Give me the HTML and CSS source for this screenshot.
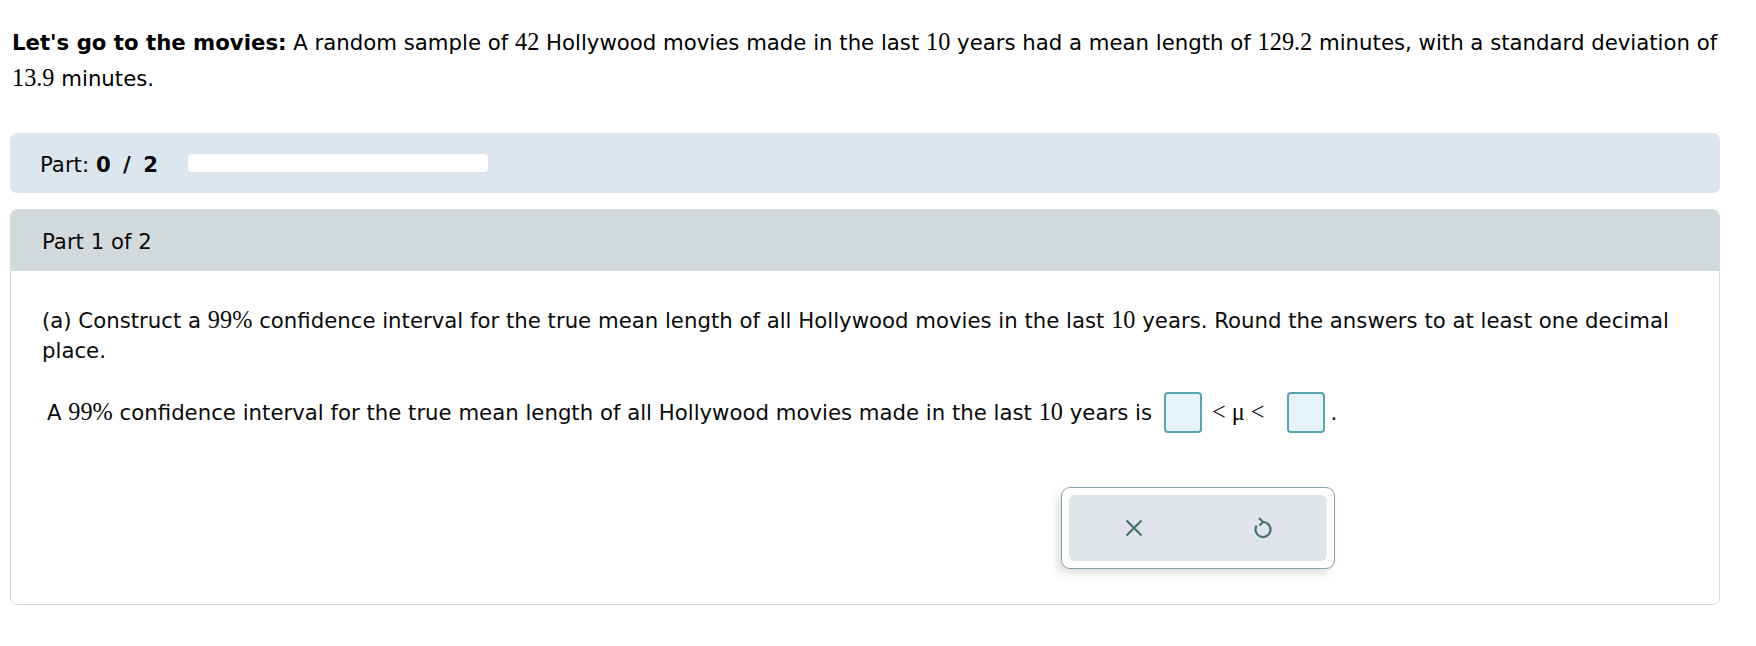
FILE: index.html
```html
<!DOCTYPE html>
<html>
<head>
<meta charset="utf-8">
<link rel="stylesheet" href="styles.css">
</head>
<body>
<div class="page">
  <p class="intro"><b>Let's go to the movies:</b> A random sample of <span class="m">42</span> Hollywood movies made in the last <span class="m">10</span> years had a mean length of <span class="m">129.2</span> minutes, with a standard deviation of <span class="m">13.9</span> <span>minutes.</span></p>

  <div class="partbar">
    <span class="partlabel">Part: <b>0 / 2</b></span>
    <div class="progress"></div>
  </div>

  <div class="card">
    <div class="card-head">Part 1 of 2</div>
    <div class="card-body">
      <p class="question">(a) Construct a <span class="m">99%</span> confidence interval for the true mean length of all Hollywood movies in the last <span class="m">10</span> years. Round the answers to at least one decimal <span>place.</span></p>
      <div class="answer">
        <span>A <span class="m">99%</span> confidence interval for the true mean length of all Hollywood movies made in the last <span class="m">10</span> years is</span>
        <span class="box"></span>
        <span class="m rel">&lt; μ &lt;</span>
        <span class="box"></span>
        <span class="dot">.</span>
      </div>
      <div class="tools">
        <div class="tools-inner">
          <button class="tool" aria-label="clear">
            <svg width="20" height="20" viewBox="0 0 20 20"><path d="M2.5 2.5 L17.5 17.5 M17.5 2.5 L2.5 17.5" stroke="#4a6e78" stroke-width="2.2" fill="none" stroke-linecap="butt"/></svg>
          </button>
          <button class="tool" aria-label="undo">
            <svg width="24" height="26" viewBox="0 0 24 26"><path d="M12 7 A7.5 7.5 0 1 1 5.6 10.6" stroke="#4a6e78" stroke-width="2.2" fill="none"/><path d="M8 3 L12 7 L8.5 10.5" stroke="#4a6e78" stroke-width="2.2" fill="none" stroke-linejoin="miter"/></svg>
          </button>
        </div>
      </div>
    </div>
  </div>
</div>
</body>
</html>
```

FILE: styles.css
```css
html, body {
  margin: 0;
  padding: 0;
  background: #fff;
}
body {
  font-family: "DejaVu Sans", Verdana, sans-serif;
  font-size: 21.25px;
  color: #0a0a0a;
}
.page {
  width: 1710px;
  padding-left: 10px;
}
.m {
  font-family: "Liberation Serif", "Times New Roman", serif;
  font-size: 24.3px;
  line-height: 1;
}
.intro {
  margin: 25px 0 0 2px;
  line-height: 36px;
  color: #000;
}
.intro b {
  font-weight: bold;
}
.partbar {
  margin-top: 36px;
  height: 60px;
  background: #dce6ef;
  border-radius: 7px;
  display: flex;
  align-items: center;
  padding-left: 30px;
  box-sizing: border-box;
}
.partlabel {
  padding-top: 3px;
  width: 148px;
}
.partlabel b {
  word-spacing: 5px;
}
.progress {
  width: 300px;
  height: 18px;
  background: #fff;
  border-radius: 4px;
}
.card {
  margin-top: 16px;
  border: 1px solid #d3dcdf;
  border-radius: 7px;
  overflow: hidden;
}
.card-head {
  height: 61px;
  background: #d2dadd;
  display: flex;
  align-items: center;
  padding-left: 31px;
  padding-top: 2px;
  box-sizing: border-box;
}
.card-body {
  padding: 35px 20px 35px 31px;
}
.question {
  margin: 0;
  line-height: 30px;
}
.answer {
  margin-top: 26px;
  margin-left: 5px;
  height: 41px;
  display: flex;
  align-items: center;
  white-space: nowrap;
}
.box {
  display: inline-block;
  width: 34px;
  height: 37px;
  border: 2px solid #5aa3b0;
  border-radius: 4px;
  background: #e6f4f8;
  margin-left: 12px;
}
.rel {
  margin: 0 10px 0 10px;
}
.dot {
  margin-left: 6px;
}
.tools {
  margin-top: 54px;
  margin-left: 1019px;
  width: 274px;
  height: 82px;
  box-sizing: border-box;
  border: 1px solid #86a4ad;
  border-radius: 9px;
  padding: 7px;
  box-shadow: -4px 5px 8px rgba(0, 0, 0, 0.12);
  background: #fff;
}
.tools-inner {
  height: 100%;
  background: #dfe5e8;
  border-radius: 6px;
  display: flex;
}
.tool {
  flex: 1;
  border: 0;
  background: transparent;
  padding: 0;
  display: flex;
  align-items: center;
  justify-content: center;
  cursor: pointer;
}
```
